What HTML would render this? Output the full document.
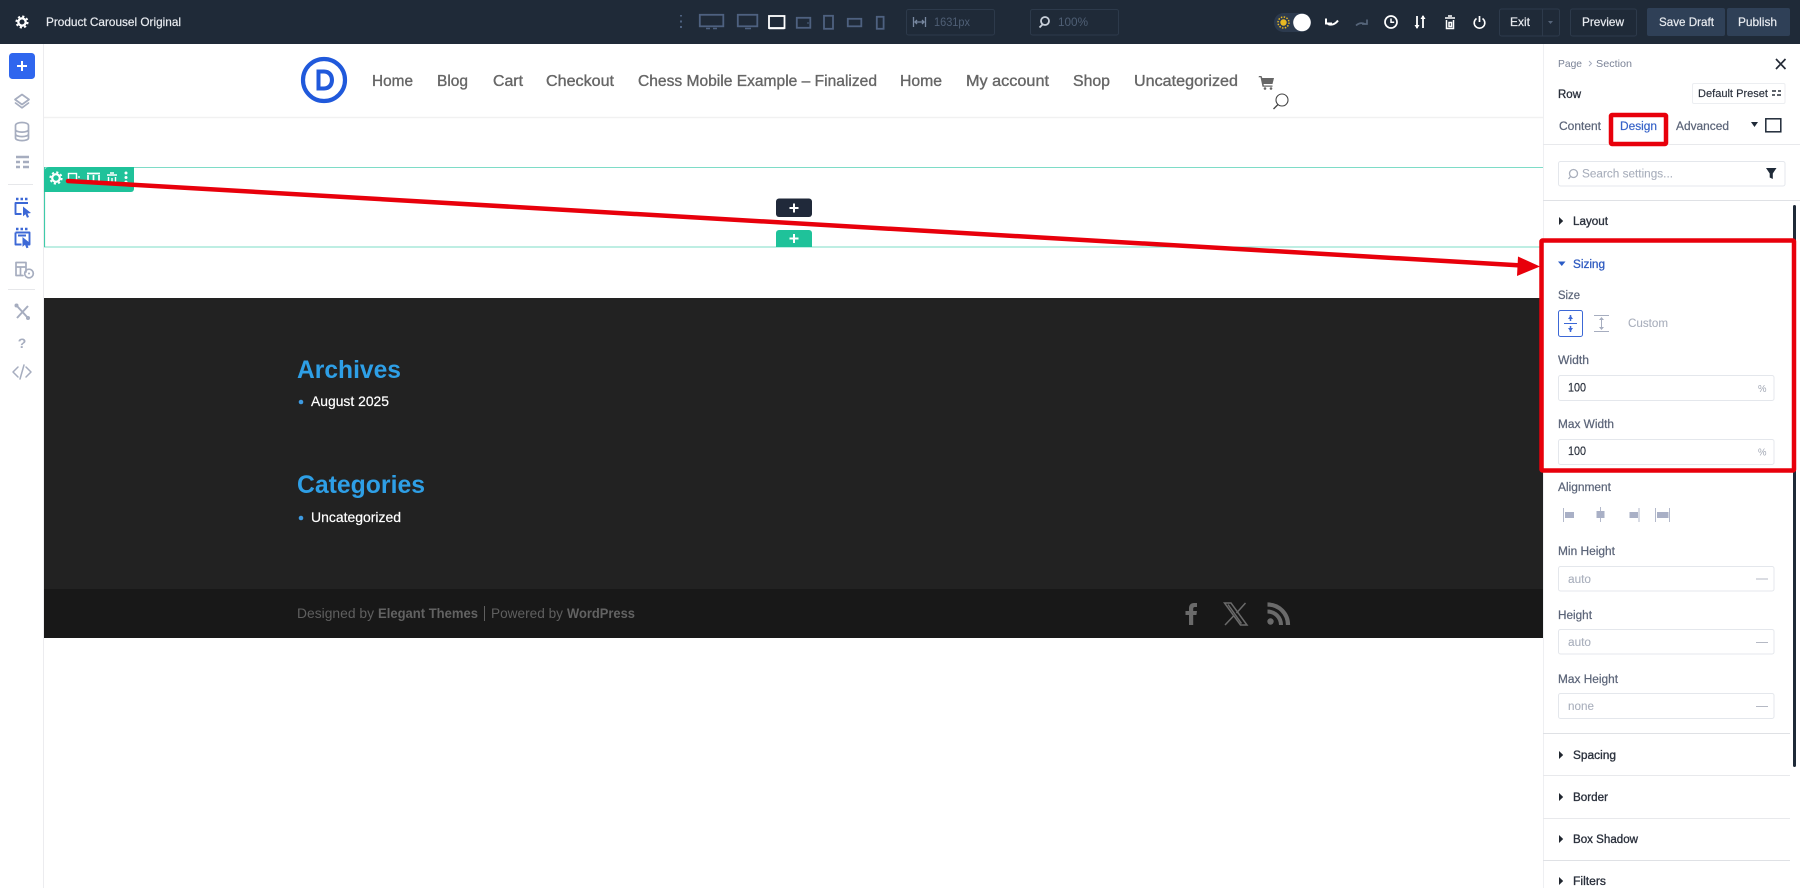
<!DOCTYPE html>
<html lang="en"><head><meta charset="utf-8"><title>Product Carousel Original</title>
<style>
html,body{margin:0;padding:0;width:1800px;height:888px;overflow:hidden;background:#fff}
svg{display:block;font-family:"Liberation Sans",sans-serif;filter:blur(.3px)}
.n{font-size:15.5px;fill:#666;stroke:#666;stroke-width:.35}
.t{font-size:12px;fill:#e8ebf0;stroke:#e8ebf0;stroke-width:.2}
.l{font-size:11.5px;fill:#5c6579;stroke:#5c6579;stroke-width:.22}
.h{font-size:11.5px;fill:#2a303c;stroke:#2a303c;stroke-width:.32}
.p{font-size:11.5px;fill:#a9afbc;stroke:#a9afbc;stroke-width:.1}
.v{font-size:11.5px;fill:#2a303c;stroke:#2a303c;stroke-width:.15}
.box{fill:#fff;stroke:#e4e7ec;stroke-width:1}
.tb{fill:none;stroke:#2d3a4b;stroke-width:1}
.ic{fill:none;stroke:#a6adbf;stroke-width:1.7;stroke-linecap:round;stroke-linejoin:round}
.bl{fill:none;stroke:#3c68d6;stroke-width:1.9;stroke-linejoin:round}
.dv{fill:none;stroke:#4e6180;stroke-width:1.8}
.sep{stroke:#e8e9ec;stroke-width:1}
</style></head><body>
<svg width="1800" height="888" viewBox="0 0 1800 888" xmlns="http://www.w3.org/2000/svg">
<rect width="1800" height="888" fill="#fff"/>

<!-- page header -->
<line x1="44" y1="117.500" x2="1543" y2="117.500" stroke="#f1f1f1" stroke-width="1.500"/>
<circle cx="324" cy="80" r="21" fill="none" stroke="#2059db" stroke-width="4.200"/>
<path d="M316.500 69.500h7.500c6.500 0 10 4.500 10 10.500s-3.500 10.500-10 10.500h-7.500zM320.500 73.500v13h3.200c4 0 6.200-2.800 6.200-6.500s-2.200-6.500-6.200-6.500z" fill="#2059db"/>
<text class="n" x="372" y="86" textLength="41" lengthAdjust="spacingAndGlyphs">Home</text>
<text class="n" x="437" y="86" textLength="31" lengthAdjust="spacingAndGlyphs">Blog</text>
<text class="n" x="493" y="86" textLength="30" lengthAdjust="spacingAndGlyphs">Cart</text>
<text class="n" x="546" y="86" textLength="68" lengthAdjust="spacingAndGlyphs">Checkout</text>
<text class="n" x="638" y="86" textLength="239" lengthAdjust="spacingAndGlyphs">Chess Mobile Example – Finalized</text>
<text class="n" x="900" y="86" textLength="42" lengthAdjust="spacingAndGlyphs">Home</text>
<text class="n" x="966" y="86" textLength="83" lengthAdjust="spacingAndGlyphs">My account</text>
<text class="n" x="1073" y="86" textLength="37" lengthAdjust="spacingAndGlyphs">Shop</text>
<text class="n" x="1134" y="86" textLength="104" lengthAdjust="spacingAndGlyphs">Uncategorized</text>
<path d="M1259 76h2.500l.8 2h11.700l-1.500 6h-9l.4 1.500h8.600v1.300h-10l-2-9.500h-2z" fill="#666"/>
<circle cx="1265" cy="88.500" r="1.300" fill="#666"/><circle cx="1271" cy="88.500" r="1.300" fill="#666"/>
<circle cx="1282" cy="100" r="6" fill="none" stroke="#444" stroke-width="1.100"/>
<line x1="1278" y1="104.500" x2="1273.500" y2="109" stroke="#444" stroke-width="1.300"/>

<!-- section outline -->
<rect x="44.500" y="167.500" width="1500" height="79.500" fill="none" stroke="#7edcc7" stroke-width="1"/>
<line x1="44.500" y1="167" x2="44.500" y2="247" stroke="#3ecba9" stroke-width="1.200"/>
<path d="M44 172a5 5 0 0 1 5-5h85v22a3 3 0 0 1-3 3H44z" fill="#1fc29a"/>
<g transform="translate(56 178)"><circle r="3.800" fill="none" stroke="#fff" stroke-width="2.200"/><circle r="5.700" fill="none" stroke="#fff" stroke-width="1.800" stroke-dasharray="2.200 2.280"/></g>
<rect x="68.500" y="173.500" width="8" height="7" fill="none" stroke="#fff" stroke-width="1.400"/><path d="M79 176v2M79 180v1" stroke="#fff" stroke-width="1.300"/>
<path d="M87 173.500h13M88 175v7M93.500 175v7M99 175v7" stroke="#fff" stroke-width="1.700" fill="none"/>
<path d="M107 175h10M110 173h4M108.500 177v6h7v-6M112 178v4" stroke="#fff" stroke-width="1.400" fill="none"/>
<circle cx="126" cy="173" r="1.500" fill="#fff"/><circle cx="126" cy="177.500" r="1.500" fill="#fff"/><circle cx="126" cy="182" r="1.500" fill="#fff"/>
<rect x="776" y="198.500" width="36" height="18.500" rx="3" fill="#20293a"/>
<path d="M794 203.500v9M789.500 208h9" stroke="#fff" stroke-width="2"/>
<path d="M776 233a3 3 0 0 1 3-3h30a3 3 0 0 1 3 3v14h-36z" fill="#1fc29a"/>
<path d="M794 234v9M789.500 238.500h9" stroke="#fff" stroke-width="2"/>

<!-- footer -->
<rect x="44" y="298" width="1499" height="291" fill="#222"/>
<rect x="44" y="589" width="1499" height="49" fill="#181818"/>
<text x="297" y="378" font-size="25" font-weight="700" fill="#2e9fe6" textLength="104" lengthAdjust="spacingAndGlyphs">Archives</text>
<circle cx="301" cy="402" r="2.300" fill="#3d9ae0"/>
<text x="311" y="406" font-size="14" fill="#fff" stroke="#fff" stroke-width=".2" textLength="78" lengthAdjust="spacingAndGlyphs">August 2025</text>
<text x="297" y="493" font-size="25" font-weight="700" fill="#2e9fe6" textLength="128" lengthAdjust="spacingAndGlyphs">Categories</text>
<circle cx="301" cy="518" r="2.300" fill="#3d9ae0"/>
<text x="311" y="522" font-size="14" fill="#fff" stroke="#fff" stroke-width=".2" textLength="90" lengthAdjust="spacingAndGlyphs">Uncategorized</text>
<text x="297" y="618" font-size="14" fill="#5f5f5f" textLength="77" lengthAdjust="spacingAndGlyphs">Designed by</text>
<text x="378" y="618" font-size="14" font-weight="700" fill="#626262" textLength="100" lengthAdjust="spacingAndGlyphs">Elegant Themes</text>
<rect x="484" y="606" width="1" height="15" fill="#5f5f5f"/>
<text x="491" y="618" font-size="14" fill="#5f5f5f" textLength="72" lengthAdjust="spacingAndGlyphs">Powered by</text>
<text x="567" y="618" font-size="14" font-weight="700" fill="#626262" textLength="68" lengthAdjust="spacingAndGlyphs">WordPress</text>
<path d="M1189 625v-10h-3.500v-4h3.500v-2.500c0-3.800 2-5.500 5-5.500h3v4h-2c-1.300 0-1.800.6-1.800 1.800v2.200h3.800l-.6 4h-3.200v10z" fill="#6a6a6a"/>
<path d="M1224.500 603h6.500l16 22h-6.500zM1245.500 603l-9 10M1234 615.500l-9 9.500M1228 604.500l13.500 19" fill="none" stroke="#6a6a6a" stroke-width="1.500"/>
<circle cx="1270.500" cy="621.500" r="3.200" fill="#6a6a6a"/>
<path d="M1267.500 611.500c7.500 0 13.500 6 13.500 13.500" fill="none" stroke="#6a6a6a" stroke-width="4"/>
<path d="M1267.500 604.500c11.500 0 20.500 9 20.500 20.500" fill="none" stroke="#6a6a6a" stroke-width="4.200"/>

<!-- left rail -->
<rect x="0" y="44" width="44" height="844" fill="#fff"/>
<line x1="43.500" y1="44" x2="43.500" y2="888" stroke="#ececef"/>
<rect x="9" y="53" width="26" height="26" rx="3.500" fill="#2f66ee"/>
<path d="M22 61v10M17 66h10" stroke="#fff" stroke-width="2"/>
<path class="ic" d="M22 94.500l7 5-7 5-7-5zM15.500 103l6.500 4.800 6.500-4.800"/>
<path class="ic" d="M15.500 125.500c0-4 13-4 13 0v12.500c0 3.500-13 3.500-13 0zM15.500 129.500c0 3.500 13 3.500 13 0M15.500 134c0 3.500 13 3.500 13 0"/>
<path d="M16 157h13M16 162h4M23 162h6M16 167h4M23 167h6" stroke="#a6adbf" stroke-width="2.600" fill="none"/>
<line x1="8" y1="184.500" x2="33" y2="184.500" stroke="#e6e7ea"/>
<path d="M16 199h2.500M20.500 199h2.500M25 199h2.500" stroke="#3c68d6" stroke-width="2.600"/>
<path class="bl" d="M28 203h-12.500v11h6"/><path d="M23 206.500l8 6.500-3.500.5 1.500 3.500-2 .8-1.500-3.500-2.500 2z" fill="#3c68d6"/>
<path d="M16 229h2.500M20.500 229h2.500M25 229h2.500" stroke="#3c68d6" stroke-width="2.600"/>
<path class="bl" d="M15.500 232.500h14v12h-4M15.500 232.500v12h6M18 235.500h8"/><path d="M22.500 237l8 6.500-3.500.5 1.500 3.500-2 .8-1.500-3.500-2.500 2z" fill="#3c68d6"/>
<path class="ic" d="M26 272v-9.500h-10v13h7M16 267h10M20.500 267v8"/>
<circle cx="29" cy="273.500" r="4.300" class="ic"/><circle cx="29" cy="273.500" r="1" fill="#a6adbf"/>
<line x1="8" y1="289.500" x2="35" y2="289.500" stroke="#e6e7ea"/>
<path d="M17 306l11 12M28 306l-11 12" stroke="#a6adbf" stroke-width="2" fill="none"/>
<circle cx="16.500" cy="305.500" r="2" fill="#a6adbf"/><circle cx="28" cy="318" r="2" fill="#a6adbf"/>
<text x="22" y="348" text-anchor="middle" font-size="14" font-weight="700" fill="#a6adbf">?</text>
<path d="M18 367l-5 5 5 5M26 367l5 5-5 5M24 365l-4 14" fill="none" stroke="#a6adbf" stroke-width="1.500" stroke-linecap="round" stroke-linejoin="round"/>

<!-- top bar -->
<rect x="0" y="0" width="1800" height="44" fill="#1f2a38"/>
<g transform="translate(22 22)"><circle r="3.700" fill="none" stroke="#fff" stroke-width="2.300"/><circle r="5.600" fill="none" stroke="#fff" stroke-width="1.900" stroke-dasharray="2.200 2.200"/></g>
<text class="t" x="46" y="26" textLength="135" lengthAdjust="spacingAndGlyphs">Product Carousel Original</text>
<path d="M681 15v1.500M681 20.500v2M681 26v2" stroke="#4e6180" stroke-width="2" fill="none"/>
<rect class="dv" x="699.800" y="14.800" width="23.500" height="11.500"/><path d="M706 28.500h4M713 28.500h4" stroke="#4e6180" stroke-width="1.500"/>
<rect class="dv" x="737.800" y="14.800" width="19.500" height="11.500"/><path d="M745 28.500h6" stroke="#4e6180" stroke-width="1.500"/>
<rect x="769" y="16" width="15.500" height="12" fill="none" stroke="#fff" stroke-width="1.800"/><path d="M769 28.500h15.500" stroke="#fff" stroke-width="1.500"/>
<rect class="dv" x="796.800" y="17.800" width="13.500" height="10"/><path d="M808 22v2" stroke="#4e6180"/>
<rect class="dv" x="824" y="15.800" width="9" height="13"/>
<rect class="dv" x="847.800" y="18.800" width="13.500" height="7.500"/>
<rect class="dv" x="876.800" y="16.800" width="6.800" height="12"/>
<rect class="tb" x="906.500" y="9.500" width="88" height="25.500" rx="2"/>
<path d="M913.500 17v10M925.500 17v10M915 22h9M917 20l-2 2 2 2M922 20l2 2-2 2" stroke="#7888a0" stroke-width="1.300" fill="none"/>
<text x="934" y="26" font-size="11.500" fill="#4f5f75" textLength="36" lengthAdjust="spacingAndGlyphs">1631px</text>
<rect class="tb" x="1030.500" y="9.500" width="88" height="25.500" rx="2"/>
<circle cx="1045" cy="21" r="4" fill="none" stroke="#c9d0da" stroke-width="1.800"/><path d="M1042.500 24.500l-3 3" stroke="#c9d0da" stroke-width="1.800"/>
<text x="1058" y="26" font-size="11.500" fill="#4f5f75" textLength="30" lengthAdjust="spacingAndGlyphs">100%</text>
<rect x="1274" y="13" width="37" height="19" rx="9.500" fill="#2c3a4e"/>
<circle cx="1283.500" cy="22.500" r="3.200" fill="#e8b923"/><circle cx="1283.500" cy="22.500" r="5.500" fill="none" stroke="#e8b923" stroke-width="1.500" stroke-dasharray="1.500 1.380"/>
<circle cx="1302" cy="22.500" r="8.800" fill="#fff"/>
<path d="M1326 18.500v5h6M1328 24c3 1.500 7 .5 10-3.500" fill="none" stroke="#fff" stroke-width="2"/>
<path d="M1367 19.500v4.500h-5M1365 24c-3-1.500-6-1-9 1.500" fill="none" stroke="#56657a" stroke-width="1.700"/>
<circle cx="1391" cy="22" r="6" fill="none" stroke="#fff" stroke-width="1.700"/><path d="M1391 18.500v3.800h3.200" fill="none" stroke="#fff" stroke-width="1.500"/>
<path d="M1417 16v12M1423 16v12" stroke="#fff" stroke-width="1.800"/><path d="M1414.500 25l2.500 4 2.500-4zM1420.500 19l2.500-4 2.500 4z" fill="#fff"/>
<path d="M1445 18h10M1448 16h4M1446.500 20v8.500h7v-8.500M1449 22.500h2.500v4h-2.500z" fill="none" stroke="#fff" stroke-width="1.500"/>
<path d="M1476.500 18.500a5.300 5.300 0 1 0 6 0" fill="none" stroke="#fff" stroke-width="1.600"/><path d="M1479.500 16v6" stroke="#fff" stroke-width="1.700"/>
<rect class="tb" x="1499.500" y="9" width="60" height="27" rx="2"/><line x1="1542.500" y1="9" x2="1542.500" y2="36" stroke="#2d3a4b"/>
<text class="t" x="1510" y="26" textLength="20" lengthAdjust="spacingAndGlyphs">Exit</text>
<path d="M1548 21h5l-2.500 3z" fill="#56657a"/>
<rect class="tb" x="1570.500" y="9" width="66" height="27" rx="2"/>
<text class="t" x="1582" y="26" textLength="42" lengthAdjust="spacingAndGlyphs">Preview</text>
<rect x="1647" y="8" width="78" height="28" rx="2" fill="#2f4057"/>
<text class="t" x="1659" y="26" textLength="55" lengthAdjust="spacingAndGlyphs">Save Draft</text>
<rect x="1727" y="8" width="63" height="28" rx="2" fill="#2f4057"/>
<text class="t" x="1738" y="26" textLength="39" lengthAdjust="spacingAndGlyphs">Publish</text>

<!-- settings panel -->
<rect x="1543" y="44" width="257" height="844" fill="#fff"/>
<line x1="1543.500" y1="44" x2="1543.500" y2="888" stroke="#eeeff2"/>
<text x="1558" y="67" font-size="10.500" fill="#7a8296" textLength="24" lengthAdjust="spacingAndGlyphs">Page</text>
<path d="M1589 61l2.500 2.500-2.500 2.500" fill="none" stroke="#a6adbf"/>
<text x="1596" y="67" font-size="10.500" fill="#7a8296" textLength="36" lengthAdjust="spacingAndGlyphs">Section</text>
<path d="M1776 59l9.500 10M1785.500 59l-9.500 10" stroke="#232a36" stroke-width="1.700"/>
<text class="h" x="1558" y="98" textLength="23" lengthAdjust="spacingAndGlyphs">Row</text>
<rect class="box" x="1692.500" y="83.500" width="92.500" height="20" rx="1.500" style="stroke:#eceef1"/>
<text class="v" x="1698" y="97" style="font-size:11px" textLength="70" lengthAdjust="spacingAndGlyphs">Default Preset</text>
<path d="M1772 91h4M1778 91h3M1772 95h3M1777 95h4" stroke="#2a303c" stroke-width="1.500"/>
<text class="l" x="1559" y="130" textLength="42" lengthAdjust="spacingAndGlyphs">Content</text>
<text x="1620" y="130" font-size="11.500" fill="#3763c8" stroke="#3763c8" stroke-width=".2" textLength="37" lengthAdjust="spacingAndGlyphs">Design</text>
<text class="l" x="1676" y="130" textLength="53" lengthAdjust="spacingAndGlyphs">Advanced</text>
<path d="M1751 122h7l-3.500 5z" fill="#1f2a38"/>
<rect x="1765.800" y="118.800" width="15" height="13" fill="none" stroke="#1f2a38" stroke-width="1.500"/>
<line class="sep" x1="1543" y1="144.500" x2="1800" y2="144.500"/>
<rect class="box" x="1558.500" y="161.500" width="226.500" height="24.500" rx="2"/>
<circle cx="1573.500" cy="173.500" r="4" fill="none" stroke="#a9afbc" stroke-width="1.300"/><path d="M1570.500 176.500l-2 2.500" stroke="#a9afbc" stroke-width="1.300"/>
<text class="p" x="1582" y="177.500" textLength="91" lengthAdjust="spacingAndGlyphs">Search settings...</text>
<path d="M1766 168h10.500l-3.700 5.500v5.500l-3.100-1.500v-4z" fill="#1f2a38"/>
<line x1="1543" y1="200.500" x2="1800" y2="200.500" stroke="#dfe1e5"/>
<path d="M1559 217l4.200 4-4.200 4z" fill="#20262f"/>
<text class="h" x="1573" y="225" textLength="35" lengthAdjust="spacingAndGlyphs">Layout</text>
<rect x="1793" y="205" width="3" height="562" rx="1.500" fill="#1f2a38"/>

<path d="M1558 261.500h7.500l-3.700 4.500z" fill="#2a5bc6"/>
<text x="1573" y="268" font-size="11.500" fill="#2f5bc0" stroke="#2f5bc0" stroke-width=".3" textLength="32" lengthAdjust="spacingAndGlyphs">Sizing</text>
<text class="l" x="1558" y="299" textLength="22" lengthAdjust="spacingAndGlyphs">Size</text>
<rect x="1558.500" y="310.500" width="24" height="26" rx="2" fill="#fff" stroke="#3c68d6"/>
<path d="M1564 323.500h13" stroke="#3c68d6" stroke-width="1"/><path d="M1570.500 315v6M1570.500 326v6" stroke="#3c68d6" stroke-width="1.500"/>
<path d="M1568 319h5l-2.500-3.500zM1568 328h5l-2.500 3.500z" fill="#3c68d6"/>
<path d="M1594 315.500h15M1594 331.500h15M1601.500 318v11" stroke="#a6adbf" stroke-width="1" fill="none"/>
<path d="M1599 320h5l-2.500-3zM1599 327h5l-2.500 3z" fill="#a6adbf"/>
<text class="p" x="1628" y="327" textLength="40" lengthAdjust="spacingAndGlyphs">Custom</text>

<text class="l" x="1558" y="364" textLength="31" lengthAdjust="spacingAndGlyphs">Width</text>
<rect class="box" x="1558.500" y="375.500" width="215.500" height="25" rx="2"/>
<text class="v" x="1568" y="391.500" textLength="18" lengthAdjust="spacingAndGlyphs">100</text>
<text x="1758" y="392" font-size="10.500" fill="#a0a6b3" textLength="8.500" lengthAdjust="spacingAndGlyphs">%</text>
<text class="l" x="1558" y="428" textLength="56" lengthAdjust="spacingAndGlyphs">Max Width</text>
<rect class="box" x="1558.500" y="439.500" width="215.500" height="25" rx="2"/>
<text class="v" x="1568" y="455" textLength="18" lengthAdjust="spacingAndGlyphs">100</text>
<text x="1758" y="455.500" font-size="10.500" fill="#a0a6b3" textLength="8.500" lengthAdjust="spacingAndGlyphs">%</text>

<text class="l" x="1558" y="491" textLength="53" lengthAdjust="spacingAndGlyphs">Alignment</text>
<path d="M1563.500 508v14M1600.500 507v15M1639 508v14M1655.500 508v14M1669.500 508v14" stroke="#b3b9cb" stroke-width="1" fill="none"/>
<rect x="1565" y="512" width="9" height="6" fill="#a9b0c6"/>
<rect x="1596.500" y="511" width="8" height="7" fill="#a9b0c6"/>
<rect x="1629.500" y="512" width="8.500" height="6" fill="#a9b0c6"/>
<rect x="1657" y="512" width="11.500" height="6" fill="#a9b0c6"/>

<text class="l" x="1558" y="555" textLength="57" lengthAdjust="spacingAndGlyphs">Min Height</text>
<rect class="box" x="1558.500" y="566.500" width="215.500" height="24.500" rx="2"/>
<text class="p" x="1568" y="583" textLength="23" lengthAdjust="spacingAndGlyphs">auto</text>
<path d="M1756 579h12" stroke="#b5b9c4"/>
<text class="l" x="1558" y="619" textLength="34" lengthAdjust="spacingAndGlyphs">Height</text>
<rect class="box" x="1558.500" y="629.500" width="215.500" height="24.500" rx="2"/>
<text class="p" x="1568" y="646" textLength="23" lengthAdjust="spacingAndGlyphs">auto</text>
<path d="M1756 642.500h12" stroke="#b5b9c4"/>
<text class="l" x="1558" y="683" textLength="60" lengthAdjust="spacingAndGlyphs">Max Height</text>
<rect class="box" x="1558.500" y="693.500" width="215.500" height="25" rx="2"/>
<text class="p" x="1568" y="710" textLength="26" lengthAdjust="spacingAndGlyphs">none</text>
<path d="M1756 706.500h12" stroke="#b5b9c4"/>

<line x1="1543" y1="733.500" x2="1790" y2="733.500" stroke="#dfe1e5"/>
<path d="M1559 751l4.200 4-4.200 4z" fill="#20262f"/>
<text class="h" x="1573" y="759" textLength="43" lengthAdjust="spacingAndGlyphs">Spacing</text>
<line class="sep" x1="1543" y1="775.500" x2="1790" y2="775.500"/>
<path d="M1559 793l4.200 4-4.200 4z" fill="#20262f"/>
<text class="h" x="1573" y="801" textLength="35" lengthAdjust="spacingAndGlyphs">Border</text>
<line class="sep" x1="1543" y1="818.500" x2="1790" y2="818.500"/>
<path d="M1559 835l4.200 4-4.200 4z" fill="#20262f"/>
<text class="h" x="1573" y="843" textLength="65" lengthAdjust="spacingAndGlyphs">Box Shadow</text>
<line x1="1543" y1="860.500" x2="1790" y2="860.500" stroke="#dfe1e5"/>
<path d="M1559 877l4.200 4-4.200 4z" fill="#20262f"/>
<text class="h" x="1573" y="885" textLength="33" lengthAdjust="spacingAndGlyphs">Filters</text>

<!-- red annotations -->
<rect x="1611" y="115" width="55" height="29" fill="none" stroke="#e8000b" stroke-width="4.500" rx="1"/>
<rect x="1541.500" y="240.500" width="252.500" height="230" fill="none" stroke="#e8000b" stroke-width="4.500" rx="1"/>
<path d="M68 181L1522 265.500" stroke="#e8000b" stroke-width="4.500" stroke-linecap="round" fill="none"/>
<path d="M1518 256.500L1540 266.500L1517 276z" fill="#e8000b"/>
</svg>
</body></html>
